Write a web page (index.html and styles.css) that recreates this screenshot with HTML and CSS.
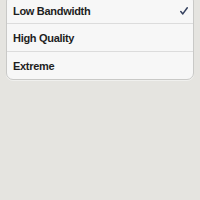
FILE: index.html
```html
<!DOCTYPE html>
<html>
<head>
<meta charset="utf-8">
<link rel="stylesheet" href="styles.css">
</head>
<body>
<div class="page">
  <ul class="group">
    <li class="row"><span class="label">Low Bandwidth</span>
      <svg class="check" width="8" height="8" viewBox="0 0 8 8"><path d="M0.8 4.6 L2.8 6.9 L7.3 0.8" fill="none" stroke="#34405e" stroke-width="1.5" stroke-linecap="round" stroke-linejoin="round"/></svg>
    </li>
    <li class="row"><span class="label">High Quality</span></li>
    <li class="row"><span class="label">Extreme</span></li>
  </ul>
</div>
</body>
</html>
```
FILE: styles.css
```css
html, body { margin: 0; padding: 0; }
body {
  background: #e5e4e0;
  font-family: "Liberation Sans", Arial, sans-serif;
  width: 200px;
  height: 200px;
  overflow: hidden;
}
.page {
  padding: 0 6px;
  margin-top: -6px;
}
.group {
  list-style: none;
  margin: 0;
  padding: 0;
  background: #f7f7f7;
  border: 1px solid #c9c9c7;
  border-radius: 7px;
  box-shadow: 0 1px 0 #f0f0ee;
}
.row {
  height: 28px;
  box-sizing: border-box;
  display: flex;
  align-items: center;
  justify-content: space-between;
  padding: 0 5px 0 6px;
  border-top: 1px solid #dcdcdc;
}
.row:first-child { border-top: none; padding-top: 3px; }
.label {
  font-size: 11px;
  font-weight: bold;
  letter-spacing: -0.3px;
  color: #1e1e1e;
}
.check { display: block; }
```
